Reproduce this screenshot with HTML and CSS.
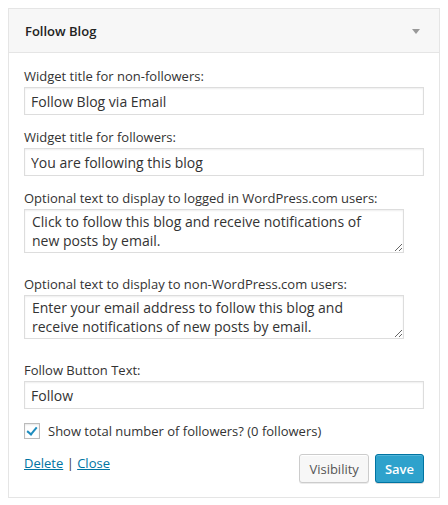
FILE: index.html
```html
<!DOCTYPE html>
<html lang="en">
<head>
    <meta charset="UTF-8">
    <title>Follow Blog widget</title>
    <link rel="stylesheet" href="styles.css">
</head>
<body>

    <div class="widget">
        <div class="widget-top">
            <h3 class="widget-title">Follow Blog</h3>
            <span class="widget-arrow"></span>
        </div>

        <form class="widget-inside">
            <div class="field">
                <label for="title">Widget title for non-followers:</label>
                <input type="text" id="title" value="Follow Blog via Email">
            </div>
            <div class="field">
                <label for="title-following">Widget title for followers:</label>
                <input type="text" id="title-following" value="You are following this blog">
            </div>
            <div class="field field-area">
                <label for="text-wpcom">Optional text to display to logged in WordPress.com users:</label>
                <textarea id="text-wpcom">Click to follow this blog and receive notifications of new posts by email.</textarea>
            </div>
            <div class="field field-area">
                <label for="text-other">Optional text to display to non-WordPress.com users:</label>
                <textarea id="text-other">Enter your email address to follow this blog and receive notifications of new posts by email.</textarea>
            </div>
            <div class="field">
                <label for="button-text">Follow Button Text:</label>
                <input type="text" id="button-text" value="Follow">
            </div>

            <label class="check-row">
                <input type="checkbox" checked>
                <span class="check-box"></span>
                Show total number of followers? (0 followers)
            </label>

            <div class="widget-control-actions">
                <div class="links">
                    <a href="#">Delete</a> | <a href="#">Close</a>
                </div>
                <div class="buttons">
                    <button type="button" class="button">Visibility</button>
                    <button type="button" class="button button-primary">Save</button>
                </div>
            </div>
        </form>
    </div>

</body>
</html>
```

FILE: styles.css
```css
body {
    margin: 8px;
    font-family: "Open Sans", sans-serif;
    font-size: 13px;
    color: #333;
    background-color: #fff;
}

.widget {
    width: 432px;
    box-sizing: border-box;
    border: 1px solid #e5e5e5;
    box-shadow: 0 1px 1px rgba(0, 0, 0, 0.04);
    background-color: #fff;
}

.widget-top {
    display: flex;
    justify-content: space-between;
    align-items: center;
    height: 43px;
    padding: 0 19px 0 16px;
    background-color: #f7f7f7;
    border-bottom: 1px solid #e5e5e5;
}

.widget-title {
    margin: 0;
    font-size: 13px;
    font-weight: 600;
    color: #222;
}

.widget-arrow {
    width: 0;
    height: 0;
    border-left: 4px solid transparent;
    border-right: 4px solid transparent;
    border-top: 5px solid #999;
    margin-top: 2px;
}

.widget-inside {
    padding: 13px 15px 14px 15px;
}

.field {
    display: flex;
    flex-direction: column;
    align-items: flex-start;
    margin-bottom: 12px;
}

.field-area {
    margin-bottom: 21px;
}

.field label {
    line-height: 21px;
}

.field input,
.field textarea {
    box-sizing: border-box;
    font-family: "Open Sans", sans-serif;
    font-size: 14px;
    color: #333;
    border: 1px solid #ddd;
    box-shadow: inset 0 1px 2px rgba(0, 0, 0, 0.07);
    background-color: #fff;
    margin: 0;
    outline: none;
}

.field input {
    width: 400px;
    height: 28px;
    padding: 3px 6px;
}

.field textarea {
    width: 380px;
    height: 44px;
    padding: 2px 30px 2px 7px;
    line-height: 19px;
    overflow: hidden;
}

.check-row {
    display: flex;
    align-items: center;
    gap: 8px;
    margin-top: 11px;
    line-height: 20px;
}

.check-row input {
    display: none;
}

.check-box {
    position: relative;
    width: 16px;
    height: 16px;
    box-sizing: border-box;
    border: 1px solid #bbb;
    background-color: #fff;
    box-shadow: inset 0 1px 2px rgba(0, 0, 0, 0.1);
}

.check-row input:checked + .check-box::after {
    content: "";
    position: absolute;
    left: 4px;
    top: 1px;
    width: 4px;
    height: 8px;
    border-right: 2px solid #1e8cbe;
    border-bottom: 2px solid #1e8cbe;
    transform: rotate(40deg);
}

.widget-control-actions {
    display: flex;
    justify-content: space-between;
    align-items: flex-start;
    margin-top: 12px;
}

.links {
    line-height: 20px;
    color: #333;
}

.links a {
    color: #0074a2;
}

.buttons {
    display: flex;
    gap: 6px;
    margin-top: 1px;
}

.button {
    height: 29px;
    padding: 0 9px;
    font-family: "Open Sans", sans-serif;
    font-size: 13px;
    color: #555;
    background-color: #f7f7f7;
    border: 1px solid #ccc;
    border-radius: 3px;
    box-shadow: inset 0 1px 0 #fff, 0 1px 0 rgba(0, 0, 0, 0.08);
    cursor: pointer;
}

.button-primary {
    color: #fff;
    font-weight: 600;
    background-color: #2ea2cc;
    border-color: #0074a2;
    box-shadow: inset 0 1px 0 rgba(120, 200, 230, 0.5), 0 1px 0 rgba(0, 0, 0, 0.15);
}
```
